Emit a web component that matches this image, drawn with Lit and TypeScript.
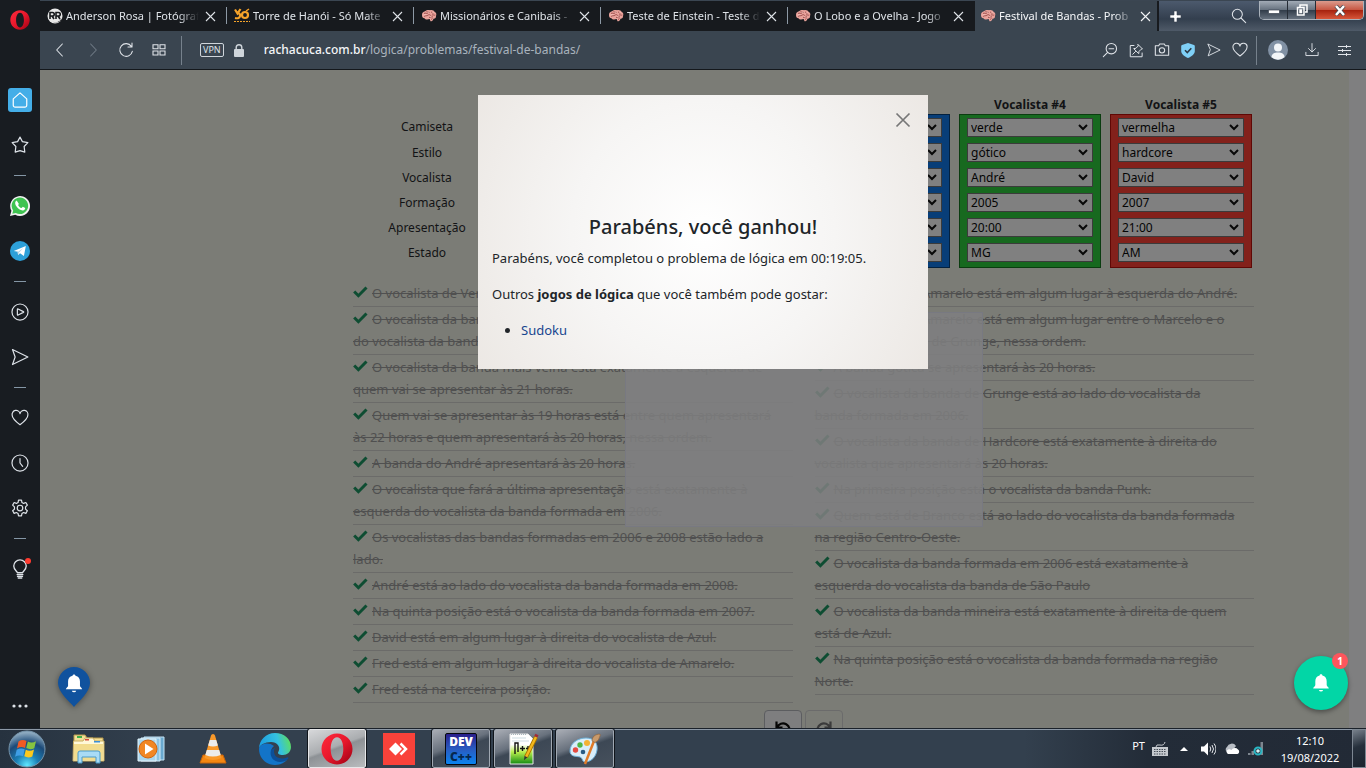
import { LitElement, html, css, svg, nothing } from "lit";
import { customElement } from "lit/decorators.js";
import { classMap } from "lit/directives/class-map.js";

const line = (size: number, body: unknown, box = 24) => html`
  <svg width=${size} height=${size} viewBox="0 0 ${box} ${box}" fill="none" stroke="currentColor"
    stroke-width="1.6" stroke-linejoin="round" stroke-linecap="round" aria-hidden="true">${body}</svg>`;

const operaO = (size: number) => html`
  <svg width=${size} height=${size} viewBox="0 0 32 32" aria-hidden="true">
    <defs>
      <linearGradient id="op" x1="0" y1="0" x2="1" y2="1">
        <stop offset="0" stop-color="#ff2a3c" /><stop offset=".5" stop-color="#e8182c" /><stop offset="1" stop-color="#9c0012" />
      </linearGradient>
    </defs>
    <path fill="url(#op)" fill-rule="evenodd"
      d="M16 0.500C7.400 .5 .5 7.400 .5 16S7.400 31.500 16 31.500 31.500 24.600 31.500 16 24.600 .5 16 .5ZM16 4.200C20 4.200 22.300 9.500 22.300 16S20 27.800 16 27.800 9.700 22.500 9.700 16 12 4.200 16 4.200Z" />
  </svg>`;

const brain = html`
  <svg width="16" height="16" viewBox="0 0 16 16" aria-hidden="true">
    <path fill="#e9a29b" d="M1 7.500C.6 5 2.500 3.500 4 3.200 5.500 1.800 8 1.800 9 2.300c2-.6 4 .2 4.500 1.500C15.300 4.500 15.800 6.500 15 8c.2 1.800-1 2.800-2.500 2.700-.3 1.700-1.600 2.600-3 2.600L8.700 11C6.500 11.800 4 11.500 3.500 10.200 2 10.200 1 9 1 7.500Z" />
    <path fill="none" stroke="#8d3f3d" stroke-width=".8" d="M3 5.500c1.500-1 2.500.5 4-.5M5.500 3.500c1 1 2.500.2 3.500 1.300M3 8.500c1.200-1.300 3-.3 4-1.300s2.500-.5 3 .6M10 3.500c1 .6 1 2 2.500 2M11 7c1.300-.6 2 .6 3.300 0M8 9.500c1-.7 3 0 4-.7M10 11.500l1.500-1" />
    <path fill="none" stroke="#fbd6d0" stroke-width=".6" d="M2.500 7c1-.6 2 .2 3-.4M6.500 4.500c.8-.6 1.500 0 2 0M11.500 4.500c.8 0 1 .6 1.500.7M9 8.500l1.500.5" />
  </svg>`;

const bellShape = svg`<path fill="#fff" d="M12 2.500c-.9 0-1.500.6-1.500 1.400C7.300 4.600 5.800 7 5.800 10v4.200c0 1.400-2.300 2.300-2.300 3.800h17c0-1.500-2.300-2.400-2.300-3.800V10c0-3-1.500-5.400-4.700-6.100 0-.8-.6-1.400-1.500-1.400ZM9.700 19.500a2.400 2.400 0 0 0 4.600 0Z" />`;

interface Tab { title: string; icon: unknown; active?: boolean; }

const tabs: Tab[] = [
  {
    title: "Anderson Rosa | Fotógraf",
    icon: html`<svg width="16" height="16" viewBox="0 0 16 16" aria-hidden="true"><circle cx="8" cy="8" r="7.500" fill="#e8e8e8" /><path fill="#16181b" d="M5 13.500a7 7 0 0 0 9.500-3V12a8 8 0 0 1-9.500 1.500Z" /><path fill="none" stroke="#16181b" stroke-width="1.600" d="M3 11V4.500h2.500a1.600 1.600 0 0 1 0 3.500H3.500M5 8l2 3M9 11V4.500h2.500a1.600 1.600 0 0 1 0 3.500H9.500M11 8l2 3" /></svg>`,
  },
  {
    title: "Torre de Hanói - Só Mate",
    icon: html`<svg width="16" height="16" viewBox="0 0 16 16" fill="none" stroke="#f5a32a" stroke-width="2.200" aria-hidden="true"><path d="M1 1.500l2.500 4L6.500 1M3.500 5.500Q6.500 5 6 8t-5 2" /><circle cx="11" cy="7" r="3" /><path stroke-width="1.500" d="M12 3l3-2" /><path stroke-width="1" stroke-dasharray="2 1" d="M0 13.500h16" /></svg>`,
  },
  { title: "Missionários e Canibais -", icon: brain },
  { title: "Teste de Einstein - Teste d", icon: brain },
  { title: "O Lobo e a Ovelha - Jogo", icon: brain },
  { title: "Festival de Bandas - Prob", icon: brain, active: true },
];

const rowNames = ["Camiseta", "Estilo", "Vocalista", "Formação", "Apresentação", "Estado"];

const singers = [
  { color: "yellow", values: ["amarela", "punk", "Marcelo", "2006", "22:00", "SP"] },
  { color: "white", values: ["branca", "grunge", "Bruno", "2008", "18:00", "RS"] },
  { color: "blue", values: ["azul", "indie", "Fred", "2006", "19:00", "GO"] },
  { color: "green", values: ["verde", "gótico", "André", "2005", "20:00", "MG"] },
  { color: "red", values: ["vermelha", "hardcore", "David", "2007", "21:00", "AM"] },
];

const clues = [
  [
    "O vocalista de Verde é o André.",
    "O vocalista da banda Indie está ao lado\ndo vocalista da banda Gótica.",
    "O vocalista da banda mais velha está exatamente à esquerda de\nquem vai se apresentar às 21 horas.",
    "Quem vai se apresentar às 19 horas está entre quem apresentará\nàs 22 horas e quem apresentará às 20 horas, nessa ordem.",
    "A banda do André apresentará às 20 horas.",
    "O vocalista que fará a última apresentação está exatamente à\nesquerda do vocalista da banda formada em 2006.",
    "Os vocalistas das bandas formadas em 2006 e 2008 estão lado a\nlado.",
    "André está ao lado do vocalista da banda formada em 2008.",
    "Na quinta posição está o vocalista da banda formada em 2007.",
    "David está em algum lugar à direita do vocalista de Azul.",
    "Fred está em algum lugar à direita do vocalista de Amarelo.",
    "Fred está na terceira posição.",
  ],
  [
    "O vocalista de Amarelo está em algum lugar à esquerda do André.",
    "O vocalista de Amarelo está em algum lugar entre o Marcelo e o\nvocalista da banda de Grunge, nessa ordem.",
    "A banda gótica se apresentará às 20 horas.",
    "O vocalista da banda de Grunge está ao lado do vocalista da\nbanda formada em 2006.",
    "O vocalista da banda de Hardcore está exatamente à direita do\nvocalista que apresentará às 20 horas.",
    "Na primeira posição está o vocalista da banda Punk.",
    "Quem está de Branco está ao lado do vocalista da banda formada\nna região Centro-Oeste.",
    "O vocalista da banda formada em 2006 está exatamente à\nesquerda do vocalista da banda de São Paulo",
    "O vocalista da banda mineira está exatamente à direita de quem\nestá de Azul.",
    "Na quinta posição está o vocalista da banda formada na região\nNorte.",
  ],
];

const heart = svg`<path d="M12 21C6 16.500 1.500 12.500 1.500 8A5.300 5.300 0 0 1 12 6.300 5.300 5.300 0 0 1 22.500 8c0 4.500-4.500 8.500-10.500 13Z" />`;
const send = svg`<path d="M2 2l20.500 10L2 22l3.500-10Z" />`;

@customElement("side-bar")
class SideBar extends LitElement {
  static styles = css`
    :host { display: flex; flex-direction: column; align-items: center; background: #181c21; color: #dde2e8; }
    .brand { height: 40px; margin-bottom: 37px; display: grid; place-items: center; }
    .item { height: 45px; width: 40px; padding: 0; border: 0; background: none; color: inherit; display: grid; place-items: center; position: relative; }
    .home { width: 24px; height: 24px; border-radius: 3px; background: #44aee8; color: #fff; display: grid; place-items: center; }
    .rule { width: 12px; height: 1px; margin: 8px 0 7px; border: 0; background: #8496a5; }
    .dot { position: absolute; top: 12px; right: 9px; width: 6px; height: 6px; border-radius: 50%; background: #ff3b30; }
    .more { margin-top: auto; }
    svg { display: block; }
  `;
  private button(label: string, body: unknown, extra = "") {
    return html`<button class="item ${extra}" aria-label=${label}>${body}</button>`;
  }
  render() {
    return html`
      <div class="brand">${operaO(20)}</div>
      ${this.button("Início", html`<span class="home">${line(18, svg`<path d="M3 10.500L12 2.500l9 8V19a2.500 2.500 0 0 1-2.500 2.500h-13A2.500 2.500 0 0 1 3 19Z" />`)}</span>`)}
      ${this.button("Favoritos", line(18, svg`<path d="M12 1.500l3.200 6 7.300 1.300-5 5.200.9 7.500-6.400-2-6.400 2 .9-7.500-5-5.200 7.300-1.300Z" />`))}
      <hr class="rule" />
      ${this.button("WhatsApp", html`<svg width="20" height="20" viewBox="0 0 24 24"><path fill="#f2f2f2" d="M0 24l1.700-6.200A11.900 11.900 0 1 1 6.300 22.400Z" /><path fill="#3fc351" d="M2.800 21.200l1-3.800A9.900 9.900 0 1 1 7 20.300Z" /><path fill="#fff" d="M8.600 6.300c-.5-.8-1.300-.5-1.700 0-2.600 3 2.500 10.500 8.300 11 2 .1 3.300-1.300 3-2.800l-2.800-1.500-1.500 1.500c-2-.7-3.400-2-4.200-3.800l1-1.200Z" /></svg>`)}
      ${this.button("Telegram", html`<svg width="20" height="20" viewBox="0 0 24 24"><circle cx="12" cy="12" r="12" fill="#2da0d9" /><path fill="#fff" d="M4.500 12L19 6l-2.300 12-4.700-3.300-2.300 2.200-.2-4Z" /><path fill="#b9d4e5" d="M8.800 13.500L16 8.500l-5.300 5.700-.9 3Z" /></svg>`)}
      <hr class="rule" />
      ${this.button("Player", line(18, svg`<circle cx="12" cy="12" r="10.700" /><path d="M8.500 8.500Q8.500 7.500 9.500 8L16.500 11.500q1 .5 0 1L9.500 16q-1 .5-1-.5Z" />`))}
      ${this.button("Minha timeline", line(18, send))}
      <hr class="rule" />
      ${this.button("Coleções", line(18, heart))}
      ${this.button("Histórico", line(18, svg`<circle cx="12" cy="12" r="10.700" /><path d="M12 6v6l3.500 4.500" />`))}
      ${this.button("Configurações", line(18, svg`<circle cx="12" cy="12" r="3.700" /><path d="M10 1.500h4l.6 3.200 2.200 1.200 3-1.200 2 3.500L19.400 10.500v3l2.400 2.200-2 3.500-3-1.200-2.200 1.300L14 22.500h-4l-.6-3.200L7.200 18l-3 1.200-2-3.500 2.400-2.200v-3L2.200 8.200l2-3.500 3 1.200 2.200-1.200Z" />`))}
      <hr class="rule" />
      ${this.button("Dicas", html`${line(20, svg`<path d="M9 16.500C8.500 14.500 4.500 13 4.500 8.500a7.500 7.500 0 0 1 15 0c0 4.500-4 6-4.500 8ZM8.500 18.700h7M9 21h6M10 23h4" />`)}<span class="dot"></span>`)}
      ${this.button("Mais", html`<svg width="18" height="4" viewBox="0 0 18 4" fill="#dde2e8"><circle cx="3" cy="2" r="1.600" /><circle cx="9" cy="2" r="1.600" /><circle cx="15" cy="2" r="1.600" /></svg>`, "more")}
    `;
  }
}

@customElement("browser-bar")
class BrowserBar extends LitElement {
  static styles = css`
    :host { display: block; font-family: "Noto Sans", "Open Sans", sans-serif; color: #dfe3e8; }
    button { border: 0; padding: 0; background: none; color: inherit; display: grid; place-items: center; }
    svg { display: block; }
    .tabs { display: flex; height: 31px; border-top: 1px solid #3b4652; box-sizing: border-box;
      background: linear-gradient(#4c5a6d, #333f4e 60%, #4f5a68); }
    .tab { flex: 0 1 187px; min-width: 0; box-sizing: border-box; display: flex; align-items: center; gap: 3px; padding: 0 11px 0 7px; background: #171a1e; position: relative; }
    .tab::after { content: ""; position: absolute; right: 0; top: 6px; width: 1px; height: 17px; background: #8d99a5; }
    .tab.last::after, .tab.active::after { display: none; }
    .tab.active { flex-basis: 184px; padding: 0 6px 0 5px; background: #3a4550; color: #f4f6f8; border-right: 2px solid #171a1e; }
    .name { flex: 1; min-width: 0; overflow: hidden; white-space: nowrap; font-size: 11px; line-height: 18px; color: inherit; text-decoration: none;
      mask-image: linear-gradient(90deg, #000 85%, transparent); }
    .close { width: 12px; height: 12px; margin-left: 2px; }
    .add { width: 32px; }
    .space { flex: 1; }
    .find { width: 40px; }
    .win { display: flex; height: 18px; border: 1px solid #aab2bb; border-top: 0; border-radius: 0 0 5px 5px; overflow: hidden; margin-right: 2px; }
    .win button { width: 28px; border-right: 1px solid #252c35; background: linear-gradient(#a2abb6, #65717e 50%, #303b48 50%, #66717e); }
    .win .quit { width: 47px; border-right: 0; background: linear-gradient(#db9b8d, #c75541 50%, #a5200d 50%, #d7563a); }
    .tools { display: flex; align-items: center; height: 39px; box-sizing: border-box; background: #3a4550; border-bottom: 1px solid #14181c; padding: 0 5px 0 3px; }
    .tools button { width: 33px; height: 30px; }
    .tools .off { color: #6f7a85; }
    .bar { width: 1px; height: 29px; background: #76818c; margin: 0 4px 0 6px; }
    .bar.tight { margin-left: 3px; }
    .vpn { font-size: 9px; line-height: 12px; border: 1px solid #cfd5db; border-radius: 2px; padding: 0 2px; margin: 0 10px 0 14px; }
    .url { flex: 1; min-width: 0; margin-left: 20px; color: #a9b3bd; font-size: 12px; line-height: 20px; white-space: nowrap; overflow: hidden; }
    .url b { font-weight: 500; color: #f4f6f8; }
    .tools .act { width: 26px; }
    .tools .user { width: 34px; }
  `;
  render() {
    return html`
      <nav class="tabs" aria-label="Guias">
        ${tabs.map((t, i) => html`
          <div class=${classMap({ tab: true, active: !!t.active, last: i === tabs.length - 2 })}>
            ${t.icon}
            <a class="name" href="#">${t.title}</a>
            <button class="close" aria-label="Fechar guia">
              <svg width="11" height="11" viewBox="0 0 11 11" stroke="currentColor" stroke-width="1.100"><path d="M1 1l9 9M10 1l-9 9" /></svg>
            </button>
          </div>`)}
        <button class="add" aria-label="Nova guia"><svg width="13" height="13" viewBox="0 0 13 13"><path fill="#fff" stroke="#3a4350" stroke-width=".6" d="M5 1h3v4h4v3H8v4H5V8H1V5h4Z" /></svg></button>
        <span class="space"></span>
        <button class="find" aria-label="Pesquisar guias">${line(16, svg`<circle cx="9.500" cy="9.500" r="7.500" /><path d="M15 15l7 7" />`)}</button>
        <div class="win">
          <button aria-label="Minimizar"><svg width="12" height="12" viewBox="0 0 12 12"><path fill="#fff" stroke="#3b4350" stroke-width=".7" d="M.5 6h11v3.500H.5Z" /></svg></button>
          <button aria-label="Restaurar"><svg width="12" height="12" viewBox="0 0 12 12" fill="none" stroke="#fff" stroke-width="1.500"><path d="M4 3V1h7v7H9" /><path d="M1.500 3.500h6.500v7.500H1.500ZM4 6h1.500v2.500H4Z" /></svg></button>
          <button class="quit" aria-label="Fechar"><svg width="12" height="11" viewBox="0 0 12 11"><path fill="none" stroke="#47484f" stroke-width="4" d="M2 1l8 9M10 1L2 10" /><path fill="none" stroke="#fff" stroke-width="2.500" d="M2 1l8 9M10 1L2 10" /></svg></button>
        </div>
      </nav>
      <div class="tools">
        <button aria-label="Voltar">${line(16, svg`<path d="M15.500 3L7 12l8.500 9" />`)}</button>
        <button class="off" aria-label="Avançar">${line(16, svg`<path d="M8.500 3l8.500 9-8.500 9" />`)}</button>
        <button aria-label="Recarregar">${line(16, svg`<path d="M20 6.500A9.500 9.500 0 1 0 21.500 14M21 1.500v6h-6" />`)}</button>
        <button aria-label="Acesso rápido"><svg width="14" height="12" viewBox="0 0 14 12" fill="none" stroke="currentColor" stroke-width="1.100"><path d="M1 .8h5v4H1ZM8 .8h5v4H8ZM1 7h5v4H1ZM8 7h5v4H8Z" /></svg></button>
        <span class="bar"></span>
        <span class="vpn">VPN</span>
        <svg width="10" height="13" viewBox="0 0 10 13"><rect y="5" width="10" height="8" rx="1" fill="#cfd5db" /><path fill="none" stroke="#cfd5db" stroke-width="1.400" d="M2.200 6V3.500a2.800 2.800 0 0 1 5.600 0V6" /></svg>
        <div class="url"><b>rachacuca.com.br</b>/logica/problemas/festival-de-bandas/</div>
        <button class="act" aria-label="Zoom">${line(16, svg`<circle cx="14" cy="10" r="7.800" /><path d="M8.500 15.500L2 22M10.500 10h7" />`)}</button>
        <button class="act" aria-label="Fixar">${line(15, svg`<path d="M8 4H2v18h19v-6M14.500 2.500l7 7-2 .5-3.500 3.500-.5 3.500-8-8L11 8.500 14.500 5ZM10.500 13.500L6 18" />`)}</button>
        <button class="act" aria-label="Captura">${line(16, svg`<path d="M2 5.500h5L8.500 3h7L17 5.500h5V20H2Z" /><circle cx="12" cy="12.500" r="4" />`)}</button>
        <button class="act" aria-label="Proteção"><svg width="14" height="15" viewBox="0 0 14 15"><path fill="#7fd0f7" d="M7 0l6 2q.8.300.8 1v5c0 3.500-3.500 5.500-6.800 7C3.700 13.500.2 11.500.2 8V3q0-.7.8-1Z" /><path fill="none" stroke="#2b3946" stroke-width="1.600" d="M4 7.200l2.300 2.300 4-4.200" /></svg></button>
        <button class="act" aria-label="Enviar">${line(14, send)}</button>
        <button class="act" aria-label="Coleções">${line(16, heart)}</button>
        <span class="bar tight"></span>
        <button class="user" aria-label="Perfil"><svg width="20" height="20" viewBox="0 0 20 20"><circle cx="10" cy="10" r="10" fill="#8191a4" /><circle cx="10" cy="7.500" r="4" fill="#f2f5f8" /><path fill="#f2f5f8" d="M3.500 17.300c0-3.500 3-4.800 6.500-4.800s6.500 1.300 6.500 4.800A10 10 0 0 1 3.500 17.300Z" /></svg></button>
        <button aria-label="Downloads">${line(14, svg`<path d="M12 1v14M6 9.500l6 6 6-6M1.500 16v5.500h21V16" />`)}</button>
        <button aria-label="Configuração fácil"><svg width="13" height="11" viewBox="0 0 13 11" stroke="currentColor" fill="none"><path d="M0 1.500h13M0 5.500h13M0 9.500h13M8.500 0v3M4.500 4v3M8.500 8v3" /></svg></button>
      </div>`;
  }
}

@customElement("logic-page")
class LogicPage extends LitElement {
  static styles = css`
    :host { display: block; position: relative; overflow: hidden; background: #7b7c76; color: #121315;
      font-family: "Noto Sans", "Open Sans", sans-serif; font-size: 13px; line-height: 22px; }
    .scroll { position: absolute; top: 0; right: 0; bottom: 0; width: 17px; background: #7f7f80; }
    .sheet { display: grid; grid-template-columns: 313fr 901fr 95fr; padding: 25px 17px 0 0; }
    .content { grid-column: 2; min-width: 0; }
    table { width: calc(100% + 7px); margin: 0; table-layout: fixed; border-spacing: 9px 0; border-collapse: separate; font-size: 12px; line-height: 19px; }
    th, td { padding: 0; }
    thead th { height: 19px; font-weight: 700; text-align: center; }
    .corner { width: 135px; }
    tbody th { font-weight: 400; text-align: center; vertical-align: top; padding: 3px 5px 0 0; }
    td { padding: 3px 7px; border: 0 solid; border-left-width: 1px; border-right-width: 1px; line-height: 0; }
    tbody tr:first-child td { border-top-width: 1px; }
    tbody tr:last-child td { border-bottom-width: 1px; padding-bottom: 5px; }
    .yellow { background: #80761a; border-color: #4b4508; }
    .white { background: #808080; border-color: #444; }
    .blue { background: #083e78; border-color: #03213f; }
    .green { background: #17691f; border-color: #0b3d10; }
    .red { background: #83211b; border-color: #5f0805; }
    select { appearance: none; display: block; width: 100%; height: 19px; box-sizing: border-box; margin: 0; padding: 0 3px; border: 1px solid #3b3b3b; border-radius: 0; color: #050505;
      font: 12px/17px "Noto Sans", "Open Sans", sans-serif;
      background: #808080 url("data:image/svg+xml,%3Csvg xmlns='http://www.w3.org/2000/svg' width='10' height='7' fill='none' stroke='%23080808' stroke-width='2'%3E%3Cpath d='M1 1l4 4 4-4'/%3E%3C/svg%3E") no-repeat right 4px center; }
    .clues { position: relative; display: grid; grid-template-columns: 1fr 1fr; column-gap: 22px; align-items: start; margin-top: 13px; }
    .list { list-style: none; margin: 0; padding: 0; color: #505050; }
    .clue { padding: 1px 0 2px; border-bottom: 1px solid #6b6b69; }
    .clue s { white-space: pre-line; }
    .clue svg { margin-right: 4px; }
    .ghost { position: absolute; top: 31px; left: 50%; width: 358px; height: 215px; box-sizing: border-box; transform: translateX(-50%); border: 1px solid #787981; background: rgba(127, 127, 128, .86); }
    .history { display: flex; justify-content: center; gap: 3px; margin-top: 7px; }
    .history button { width: 38px; height: 38px; padding: 0; display: grid; place-items: center; border: 1px solid #5c5d60; border-radius: 4px; background: #7e7e7f; color: #050505; }
    .history .off { background: none; border-color: #6b6b6b; color: #3b3b3b; }
    .layer { position: absolute; inset: 25px 0 auto; display: flex; justify-content: center; }
    .modal { position: relative; width: 450px; box-sizing: border-box; padding: 117px 14px 28px; color: #212529;
      background: radial-gradient(circle at center, #fff 0, #f6f5f4 50%, #ece8e4 100%); }
    h2 { margin: 0 0 5px; font-size: 20px; line-height: 30px; font-weight: 500; text-align: center; }
    p { margin: 0 0 14px; }
    .more { margin: 0; padding-left: 29px; }
    .more a { color: #17458f; text-decoration: none; }
    .x { position: absolute; top: 17px; right: 17px; width: 16px; height: 16px; border: 0; padding: 0; background: none; color: #777; }
    .x svg { display: block; }
    .pin { position: absolute; left: 16px; bottom: 20px; padding: 0; border: 0; background: none; filter: drop-shadow(0 1px 3px rgba(0, 0, 0, .4)); }
    .pin svg { display: block; }
    .bell { position: absolute; right: 18px; bottom: 18px; width: 54px; height: 54px; padding: 0; border: 0; border-radius: 50%; display: grid; place-items: center; background: #02d6a6; box-shadow: 0 2px 5px rgba(0, 0, 0, .4); }
    .count { position: absolute; top: -3px; right: 0; width: 16px; height: 16px; border-radius: 50%; background: #fd565c; color: #fff; font: 700 10px/16px "Noto Sans", sans-serif; text-align: center; }
  `;
  render() {
    return html`
      <div class="sheet">
        <main class="content">
          <table>
            <thead><tr><th class="corner"></th>${singers.map((_, i) => html`<th scope="col">Vocalista #${i + 1}</th>`)}</tr></thead>
            <tbody>
              ${rowNames.map((name, r) => html`<tr><th scope="row">${name}</th>
                ${singers.map((s, c) => html`<td class=${s.color}><select aria-label="${name}, vocalista ${c + 1}"><option>${s.values[r]}</option></select></td>`)}
              </tr>`)}
            </tbody>
          </table>
          <section class="clues">
            ${clues.map((col) => html`<ul class="list">${col.map((c) => html`<li class="clue"><svg width="15" height="12" viewBox="0 0 15 12" aria-hidden="true"><path fill="none" stroke="#0e4d32" stroke-width="3" d="M1.200 5.500l4.200 4.200L13.500 1.500" /></svg><s>${c}</s></li>`)}</ul>`)}
            <div class="ghost"></div>
          </section>
          <div class="history">
            <button aria-label="Desfazer"><svg width="18" height="18" viewBox="0 0 18 18" fill="none" stroke="currentColor" stroke-width="2.200"><path d="M2.500 1.500v6h6M3 7.500a6.500 6.500 0 1 1 1.500 7" /></svg></button>
            <button class="off" aria-label="Refazer"><svg width="18" height="18" viewBox="0 0 18 18" fill="none" stroke="currentColor" stroke-width="2.200"><path d="M15.500 1.500v6h-6M15 7.500a6.500 6.500 0 1 0-1.500 7" /></svg></button>
          </div>
        </main>
      </div>
      <div class="scroll"></div>
      <div class="layer">
        <div class="modal" role="dialog" aria-labelledby="won">
          <button class="x" aria-label="Fechar"><svg width="16" height="16" viewBox="0 0 16 16" stroke="currentColor" stroke-width="1.700"><path d="M1.500 1.500l13 13M14.500 1.500l-13 13" /></svg></button>
          <h2 id="won">Parabéns, você ganhou!</h2>
          <p>Parabéns, você completou o problema de lógica em 00:19:05.</p>
          <p>Outros <b>jogos de lógica</b> que você também pode gostar:</p>
          <ul class="more"><li><a href="#">Sudoku</a></li></ul>
        </div>
      </div>
      <button class="pin" aria-label="Notificações"><svg width="36" height="42" viewBox="0 0 36 42"><path fill="#10529e" d="M18 41C13 35 2 26 2 17a16 16 0 0 1 32 0c0 9-11 18-16 24Z" /><g transform="translate(6.500 6) scale(.96)">${bellShape}</g></svg></button>
      <button class="bell" aria-label="Avisos"><svg width="22" height="22" viewBox="0 0 24 24">${bellShape}</svg><span class="count">1</span></button>
    `;
  }
}

const taskIcons = {
  explorer: html`<svg width="34" height="32" viewBox="0 0 34 32"><path fill="#f3df96" stroke="#b79a4b" d="M2 7V2h11l2 3h16v21H2Z" /><path fill="#3fae49" d="M5 3h5v2H5Z" /><path fill="#fff8d8" stroke="#c9ad61" d="M1.500 8H11l2-3h8l2 3h9v20h-31Z" /><path fill="#f2dc8e" d="M2 11h29.500v16.500H2Z" /><path fill="#d6483b" d="M13 6h4v1.500h-4Z" /><path fill="#3b8ed8" d="M22 8h6v1.500h-6Z" /><path fill="#a9dbf5" stroke="#4a9bc9" d="M6 30V20q0-2 2-2h18q2 0 2 2v10h-4v-6H10v6Z" /></svg>`,
  wmp: html`<svg width="30" height="28" viewBox="0 0 30 28"><path fill="#6aa9cf" stroke="#c5e3f4" d="M8 2h20v23H8Z" /><path fill="#8cc4e4" stroke="#d5ecf8" d="M5 3h19v23H5Z" /><path fill="#a9d6ee" stroke="#e5f4fb" d="M2 4h18v22H2Z" /><circle cx="12" cy="14" r="9" fill="#f18724" stroke="#d2640c" /><path fill="#fff" d="M9 8.500l8.500 5.500L9 19.500Z" /></svg>`,
  vlc: html`<svg width="28" height="32" viewBox="0 0 28 32"><path fill="#f48712" stroke="#c9640a" d="M4 22h20l3 8H1Z" /><path fill="#f9992a" d="M14 1q1.600 0 2 1.500L22.500 25q-8.500 4-17 0L12 2.500Q12.400 1 14 1Z" /><path fill="#ececec" d="M10.800 7h6.400l1.700 5.500q-5 2-9.800 0ZM7.800 17h12.400l1.500 5q-8 3-15.400 0Z" /></svg>`,
  edge: html`<svg width="34" height="34" viewBox="0 0 34 34"><defs><linearGradient id="ea" x1="0" x2="1" y1="0.500" y2="0.300"><stop stop-color="#1b9de2" /><stop offset=".6" stop-color="#35c1e0" /><stop offset="1" stop-color="#5fe05a" /></linearGradient></defs><path fill="#1374c8" d="M1 17C1 26 8 33 17 33c5 0 9-2 12-5-8 3-16-1-16-8 0-3 1-4 3-6C10 9 1 12 1 17Z" /><path fill="#0c4f98" d="M13 18c-2 7 3 12 9 12 3 0 6-1 8-3 1-1 0-2-1-1.500-6 2.500-13 0-13-6 0-2 .5-3 1.500-4Z" /><path fill="url(#ea)" d="M1 17C1 8 8 1 17 1s16 6 16 14c0 5-4 8-8 8s-6-1.500-4.500-3.500C23 15 19 10 13 10S1 13 1 17Z" /></svg>`,
  opera: operaO(32),
  anydesk: html`<svg width="32" height="32" viewBox="0 0 32 32"><path fill="#f9423a" d="M0 0h32v32H0Z" /><path fill="#fff" d="M6 16l6.500-6.500L19 16l-6.500 6.500Z" /><path fill="none" stroke="#fff" stroke-width="2.500" d="M17.500 10.500L23 16l-5.500 5.500" /></svg>`,
};

@customElement("task-bar")
class TaskBar extends LitElement {
  static styles = css`
    :host { display: flex; align-items: stretch; height: 40px; box-sizing: border-box; border-top: 1px solid #1a212a; color: #fff;
      background: linear-gradient(90deg, #26323f, #33404e 12%, #33404e 75%, #232c38 84%, #222a36); box-shadow: inset 0 1px #8c98a6;
      font-family: "Noto Sans", "Open Sans", sans-serif; font-size: 11px; line-height: 17px; }
    button { padding: 0; border: 0; background: none; color: inherit; display: grid; place-items: center; }
    svg { display: block; }
    .start { width: 54px; margin-right: 6px; }
    .app { width: 58px; margin-right: 4px; box-sizing: border-box; }
    .open { border: 1px solid #a0a8b2; border-radius: 2px; outline: 1px solid #10151b; background: linear-gradient(160deg, #a9adb5 0, #68717d 40%, #3d4855 50%, #47515d); }
    .front { background: linear-gradient(160deg, #d7d8da 0, #aaadb0 45%, #8d9195 50%, #b9bcbe); border-color: #e6e7e9; }
    .dev { width: 32px; height: 32px; box-sizing: border-box; border: 1px solid #05070e; border-radius: 2px; background: linear-gradient(#2a1f8c, #2a5bc0 50%, #0b84f0); font: 800 12px/15px "Open Sans", sans-serif; color: #fff; text-align: center; display: block; }
    .dev i { font-style: normal; display: block; color: #06284e; }
    .tray { margin-left: auto; display: flex; align-items: center; }
    .tray button { width: 24px; height: 30px; }
    .lang { margin-right: 3px; line-height: 24px; padding-bottom: 6px; }
    .clock { width: 76px; padding: 0 4px; text-align: center; display: grid; }
    .tray .show { width: 14px; height: auto; box-sizing: border-box; align-self: stretch; border: 1px solid #7d8792; background: linear-gradient(160deg, #77808b, #26303c 45%, #1b232d); }
  `;
  render() {
    const app = (label: string, icon: unknown, state = "") => html`<button class="app ${state}" aria-label=${label}>${icon ?? nothing}</button>`;
    return html`
      <button class="start" aria-label="Iniciar"><svg width="38" height="38" viewBox="0 0 38 38">
        <defs><radialGradient id="orb" cx=".5" cy=".95" r=".9"><stop stop-color="#5fe8ff" /><stop offset=".35" stop-color="#1b7fb5" /><stop offset=".7" stop-color="#1c4a78" /><stop offset="1" stop-color="#8ca9bf" /></radialGradient></defs>
        <circle cx="19" cy="19" r="18" fill="url(#orb)" stroke="#7695ab" />
        <path fill="#ef5a24" d="M10.500 11.500q4-2.500 8-.5l-1.500 7q-4-2-8 .5Z" /><path fill="#86c440" d="M19.800 11.500q4 2 8.200-.3l-1.700 7q-4 2-8-.2Z" />
        <path fill="#3f9ee5" d="M8.700 19.800q4-2.500 8-.5l-1.600 7q-4-2-8 .5Z" /><path fill="#fbc91d" d="M17.800 19.800q4 2 8.200-.3l-1.700 7q-4 2-8-.2Z" />
      </svg></button>
      ${app("Explorador", taskIcons.explorer)}
      ${app("Media Player", taskIcons.wmp)}
      ${app("VLC", taskIcons.vlc)}
      ${app("Edge", taskIcons.edge)}
      ${app("Opera", taskIcons.opera, "open front")}
      ${app("AnyDesk", taskIcons.anydesk)}
      ${app("Dev-C++", html`<span class="dev">DEV<i>C++</i></span>`, "open")}
      ${app("Notepad++", html`<svg width="32" height="32" viewBox="0 0 32 32"><defs><linearGradient id="np" x2="0" y2="1"><stop offset=".35" stop-color="#fff" /><stop offset=".6" stop-color="#b7ee4e" /><stop offset="1" stop-color="#128a12" /></linearGradient></defs><path fill="url(#np)" stroke="#e8e8e8" d="M3 1h18l5 5v25H3Z" /><path fill="none" stroke="#a9b7bd" stroke-dasharray="1 1" d="M4 1.500h16" /><path fill="none" stroke="#cfdde3" d="M5 5h14M5 8h17" /><path fill="none" stroke="#111" stroke-width="1.400" d="M8 21V10h3v9M13 15.500h5M15.500 13v5M19 15.500h4M21 13v5" /><path stroke="#a87400" stroke-width="4" d="M29 4L19 24" /><path stroke="#f5b81c" stroke-width="2.400" d="M29 4L19 24" /><path stroke="#a32b36" stroke-width="3.500" d="M30 1.500l-1.200 2.300" /><path fill="#333" d="M17.500 23l3 1.300-3.500 3Z" /></svg>`, "open")}
      ${app("Paint", html`<svg width="34" height="34" viewBox="0 0 34 34"><path fill="#d9eefa" stroke="#6fb2da" d="M2 19C2 11 10 6 18 6s12 5 11 12-6 12-12 12c-3 0-2-4-5-5-4-1-10 0-10-6Z" /><circle cx="7.500" cy="18" r="2.700" fill="#e54b41" /><circle cx="12" cy="13" r="2.700" fill="#4fb548" /><circle cx="19" cy="11" r="3" fill="#f4b233" /><circle cx="15" cy="20" r="2.300" fill="#285b84" /><path stroke="#e07b28" stroke-width="2.500" d="M26 9L17 32" /><path fill="#c99a6b" stroke="#8c6037" stroke-width=".6" d="M24 9q0-6 7-7 2 0 1 2-1 5-5 6.500Z" /></svg>`, "open")}
      <div class="tray">
        <span class="lang">PT</span>
        <button aria-label="Teclado"><svg width="16" height="14" viewBox="0 0 16 14"><path fill="#c6cacf" d="M0 5h16v9H0Z" /><path fill="none" stroke="#454d57" stroke-dasharray="1.500 1" d="M2 7.500h12M2 9.500h12M2 12h12" /><path fill="none" stroke="#c6cacf" d="M4 5q0-3 4-2t5-3" /></svg></button>
        <button aria-label="Ícones ocultos"><svg width="8" height="4" viewBox="0 0 8 4"><path fill="#fff" d="M4 0l4 4H0Z" /></svg></button>
        <button aria-label="Volume"><svg width="15" height="14" viewBox="0 0 15 14"><path fill="#fff" d="M0 4.500h3L7 .5v13l-4-4H0Z" /><path fill="none" stroke="#e3e6ea" d="M9 4.500q1.500 2.500 0 5M11 3q3 4 0 8M13 1.500q4 5.500 0 11" /></svg></button>
        <button aria-label="Nuvem"><svg width="16" height="11" viewBox="0 0 16 11"><path fill="#b9bec5" d="M3 9a3 3 0 0 1 0-5A5 5 0 0 1 12 3l-5 6Z" /><path fill="#fff" d="M4 11a2.500 2.500 0 0 1 0-4.500q2-.5 3.500.5a4 4 0 0 1 6.500-.5A2.500 2.500 0 0 1 13.500 11Z" /></svg></button>
        <button aria-label="Rede"><svg width="16" height="14" viewBox="0 0 16 14"><path fill="#7d868f" d="M0 11h2.500v2H0ZM3.500 9H6v4H3.500ZM12.500 0H15v13h-2.500Z" /><circle cx="10" cy="9" r="3.500" fill="none" stroke="#2ab7c4" stroke-width="2" /><circle cx="10" cy="9" r="1.800" fill="#d5f3f6" /></svg></button>
        <time class="clock"><span>12:10</span><span>19/08/2022</span></time>
        <button class="show" aria-label="Mostrar área de trabalho"></button>
      </div>`;
  }
}

@customElement("app-root")
class AppRoot extends LitElement {
  static styles = css`
    :host { display: grid; grid-template: auto minmax(0, 1fr) auto / 40px minmax(0, 1fr); height: 100vh; overflow: hidden; background: #181c21; }
    side-bar { grid-row: 1 / 3; }
    task-bar { grid-column: 1 / 3; }
  `;
  render() {
    return html`<side-bar></side-bar><browser-bar></browser-bar><logic-page></logic-page><task-bar></task-bar>`;
  }
}
